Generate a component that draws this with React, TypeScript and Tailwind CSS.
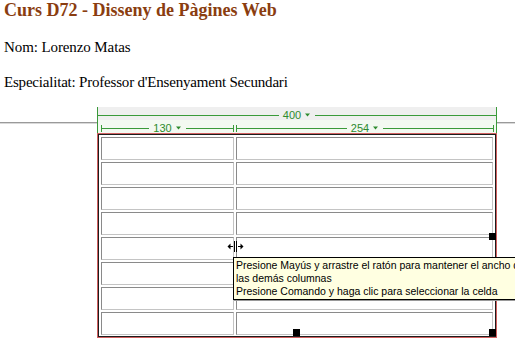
import React from "react"

const ROWS = 8

function Caret() {
  return (
    <svg width="7" height="4" viewBox="0 0 7 4" className="ml-[3px] shrink-0">
      <path d="M1 0.5 L6 0.5 L3.5 3.5 Z" fill="#2e8b2e" />
    </svg>
  )
}

function RulerLabel({ value }: { value: number }) {
  return (
    <div className="flex items-center px-[4px] text-[11px] leading-[11px] text-[#2e8b2e] [font-family:Liberation_Sans,sans-serif]">
      {value}
      <Caret />
    </div>
  )
}

function ColumnRuler({ value, width }: { value: number; width: string }) {
  return (
    <div className={`flex items-center ${width}`}>
      <div className="w-px h-[7px] bg-[#3a9a3a]" />
      <div className="flex-1 h-px bg-[#3a9a3a]" />
      <RulerLabel value={value} />
      <div className="flex-1 h-px bg-[#3a9a3a]" />
      <div className="w-px h-[7px] bg-[#3a9a3a]" />
    </div>
  )
}

function HrLine() {
  return (
    <div className="pt-[15px]">
      <div className="h-px bg-[#9a9a9a]" />
      <div className="h-px bg-[#d9d9d9]" />
    </div>
  )
}

function Cell() {
  return (
    <div className="h-[23px] border border-t-[#8a8a8a] border-l-[#8a8a8a] border-b-[#c4c4c4] border-r-[#c4c4c4] bg-white" />
  )
}

function Handle({ className }: { className: string }) {
  return <div className={`absolute w-[7px] h-[7px] bg-black ${className}`} />
}

export default function App() {
  return (
    <div className="relative w-[515px] h-[344px] overflow-hidden bg-white [font-family:Liberation_Serif,serif] text-black">
      <div className="pl-[4px]">
        <h1 className="text-[18px] leading-[20px] font-bold text-[#8a3d10]">
          Curs D72 - Disseny de Pàgines Web
        </h1>
        <p className="mt-[18px] text-[15px] leading-[18px] tracking-[-0.1px]">Nom: Lorenzo Matas</p>
        <p className="mt-[17px] text-[15px] leading-[18px] tracking-[-0.2px]">
          Especialitat: Professor d'Ensenyament Secundari
        </p>
      </div>

      <div className="mt-[16px] flex items-start">
        <div className="w-[97px]">
          <HrLine />
        </div>

        <div className="relative w-[400px]">
          {/* width rulers */}
          <div className="h-[26px] border-x border-[#3a9a3a] flex flex-col">
            <div className="h-[13px] pt-[3px] bg-[#efefef] flex items-center">
              <div className="flex-1 h-px bg-[#3a9a3a]" />
              <RulerLabel value={400} />
              <div className="flex-1 h-px bg-[#3a9a3a]" />
            </div>
            <div className="h-[13px] pt-[3px] bg-[#f3f9f1] flex items-center pl-[3px] pr-[2px] gap-[2px]">
              <ColumnRuler value={130} width="w-[133px]" />
              <ColumnRuler value={254} width="flex-1" />
            </div>
          </div>

          {/* table */}
          <div className="border border-[#d06060]">
            <div className="border border-[#1c1c1c] px-[2px] pt-[2px] pb-px grid grid-cols-[133px_257px] gap-[2px]">
              {Array.from({ length: ROWS }).flatMap((_, i) => [
                <Cell key={`a${i}`} />,
                <Cell key={`b${i}`} />,
              ])}
            </div>
          </div>

          <Handle className="left-[392px] top-[126px]" />
          <Handle className="left-[196px] top-[222px]" />
          <Handle className="left-[392px] top-[222px]" />
        </div>

        <div className="flex-1">
          <HrLine />
        </div>
      </div>

      {/* column resize cursor */}
      <svg
        width="17"
        height="11"
        viewBox="0 0 17 11"
        className="absolute left-[227px] top-[241px]"
      >
        <rect x="7" y="0" width="1" height="11" fill="#000" />
        <rect x="9" y="0" width="1" height="11" fill="#000" />
        <rect x="3" y="5" width="3" height="1" fill="#000" />
        <rect x="11" y="5" width="3" height="1" fill="#000" />
        <path d="M0.5 5.5 L3.5 2.5 L3.5 8.5 Z" fill="#000" />
        <path d="M16.5 5.5 L13.5 2.5 L13.5 8.5 Z" fill="#000" />
      </svg>

      {/* tooltip */}
      <div className="absolute left-[233px] top-[257px] border border-black bg-[#ffffe1] px-[2px] py-px text-[10.5px] leading-[13px] whitespace-nowrap [font-family:Liberation_Sans,sans-serif] shadow-[1px_1px_0_#9a9a9a]">
        <div>Presione Mayús y arrastre el ratón para mantener el ancho de</div>
        <div>las demás columnas</div>
        <div>Presione Comando y haga clic para seleccionar la celda</div>
      </div>
    </div>
  )
}
